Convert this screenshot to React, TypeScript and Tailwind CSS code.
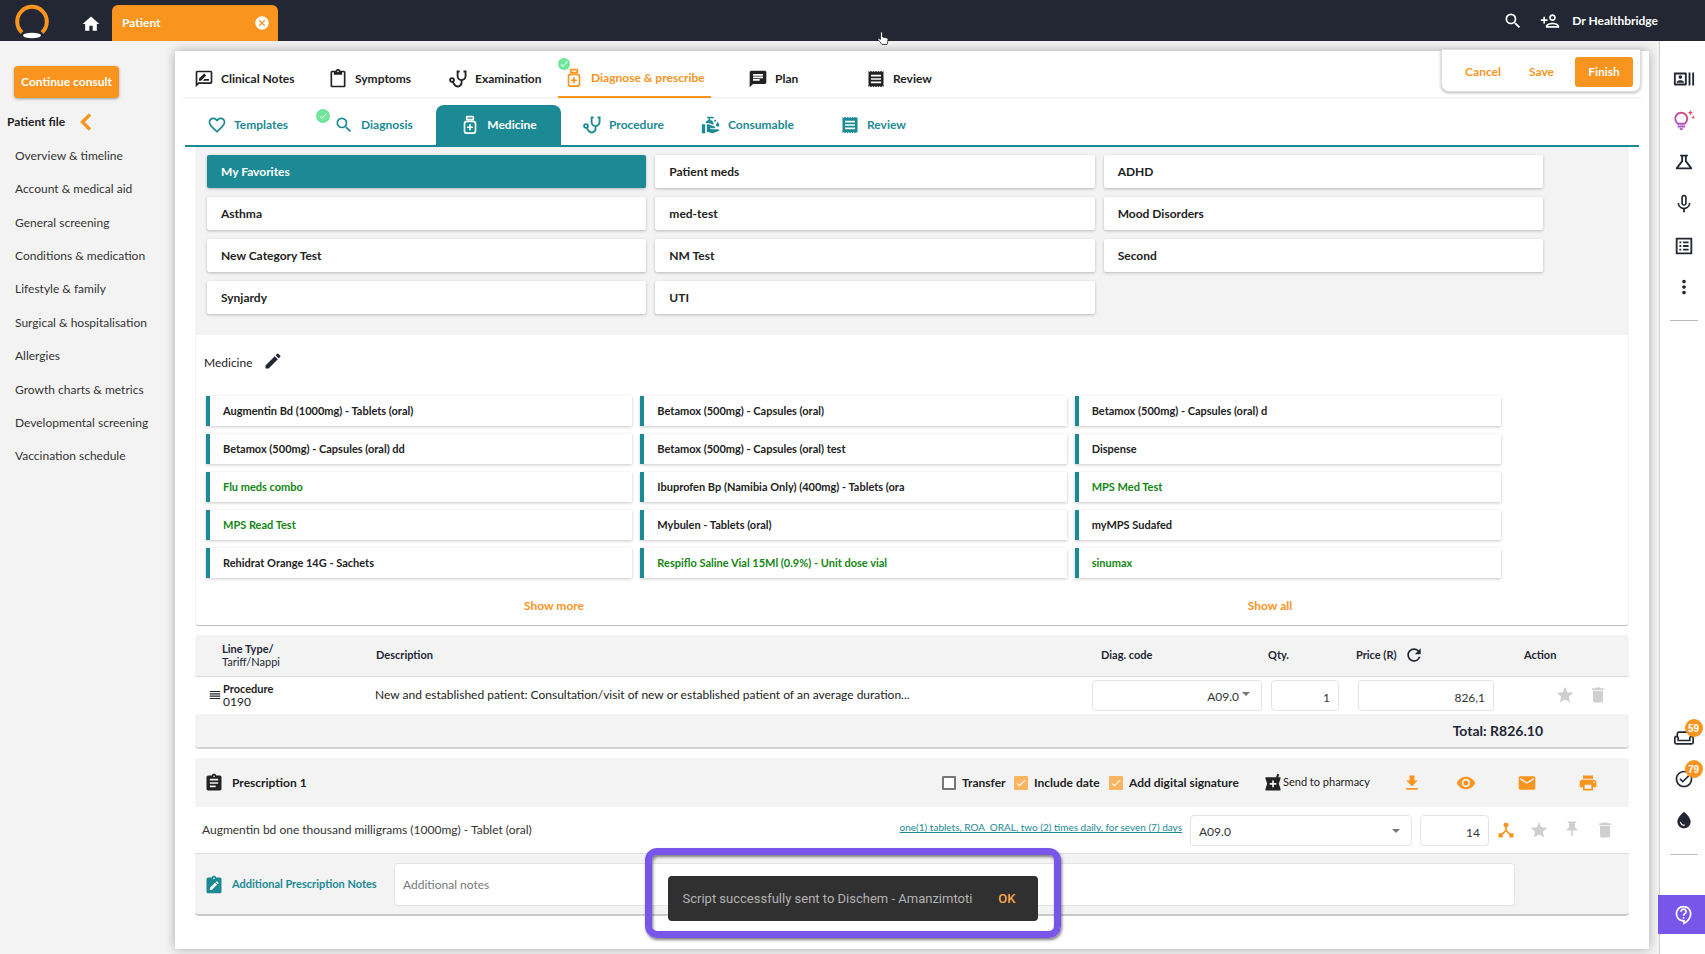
import type { IconType } from 'react-icons';
import {
  MdAssignment,
  MdCancel,
  MdChat,
  MdCheck,
  MdCleanHands,
  MdContentPaste,
  MdDelete,
  MdDeviceHub,
  MdEdit,
  MdEmail,
  MdFavoriteBorder,
  MdFileDownload,
  MdHome,
  MdLocalPharmacy,
  MdMicNone,
  MdMoreVert,
  MdOutlineContactSupport,
  MdOutlineListAlt,
  MdOutlinePersonAdd,
  MdOutlineRateReview,
  MdOutlineRecentActors,
  MdOutlineScience,
  MdOutlineTipsAndUpdates,
  MdOutlineWeekend,
  MdPrint,
  MdPushPin,
  MdReceipt,
  MdRefresh,
  MdReorder,
  MdSearch,
  MdStar,
  MdTaskAlt,
  MdVisibility,
  MdWaterDrop,
} from 'react-icons/md';

const sidebarItems = [
  'Overview & timeline',
  'Account & medical aid',
  'General screening',
  'Conditions & medication',
  'Lifestyle & family',
  'Surgical & hospitalisation',
  'Allergies',
  'Growth charts & metrics',
  'Developmental screening',
  'Vaccination schedule',
];

const categories = [
  'My Favorites',
  'Patient meds',
  'ADHD',
  'Asthma',
  'med-test',
  'Mood Disorders',
  'New Category Test',
  'NM Test',
  'Second',
  'Synjardy',
  'UTI',
];

const medicines = [
  { name: 'Augmentin Bd (1000mg) - Tablets (oral)' },
  { name: 'Betamox (500mg) - Capsules (oral)' },
  { name: 'Betamox (500mg) - Capsules (oral) d' },
  { name: 'Betamox (500mg) - Capsules (oral) dd' },
  { name: 'Betamox (500mg) - Capsules (oral) test' },
  { name: 'Dispense' },
  { name: 'Flu meds combo', combo: true },
  { name: 'Ibuprofen Bp (Namibia Only) (400mg) - Tablets (ora' },
  { name: 'MPS Med Test', combo: true },
  { name: 'MPS Read Test', combo: true },
  { name: 'Mybulen - Tablets (oral)' },
  { name: 'myMPS Sudafed' },
  { name: 'Rehidrat Orange 14G - Sachets' },
  { name: 'Respiflo Saline Vial 15Ml (0.9%) - Unit dose vial', combo: true },
  { name: 'sinumax', combo: true },
];

function Stethoscope({ className }: { className?: string }) {
  return (
    <svg viewBox="0 0 24 24" fill="none" stroke="currentColor" strokeWidth="2.2" className={className}>
      <path d="M14 3h-2.500v5.500a4.800 4.800 0 0 0 9.600 0V3h-2.500" />
      <path d="M16.300 13v3.300a4.700 4.700 0 0 1-8.700 2.400L5.800 15.500" />
      <circle cx="4.800" cy="13.200" r="2.300" />
    </svg>
  );
}

function PillBottle({ className }: { className?: string }) {
  return (
    <svg viewBox="0 0 24 24" fill="none" stroke="currentColor" strokeWidth="2" className={className}>
      <rect x="8" y="2" width="8" height="3.600" rx=".6" />
      <rect x="5.400" y="7.600" width="13.200" height="14.200" rx="3" />
      <path d="M12 11.200v7M8.500 14.700h7" />
    </svg>
  );
}

function ClipboardEdit({ className }: { className?: string }) {
  return (
    <svg viewBox="0 0 24 24" className={className}>
      <path
        fill="currentColor"
        d="M19 3h-4.180C14.400 1.840 13.300 1 12 1s-2.400.840-2.820 2H5a2 2 0 0 0-2 2v15a2 2 0 0 0 2 2h14a2 2 0 0 0 2-2V5a2 2 0 0 0-2-2z"
      />
      <circle cx="12" cy="4" r="1" fill="#fff" />
      <path fill="#fff" d="M7 15.600V18h2.400l6.200-6.200-2.400-2.400zM17.300 10.100a.7.7 0 0 0 0-1L15.900 7.700a.7.7 0 0 0-1 0l-1 1 2.400 2.400z" />
    </svg>
  );
}

function DoneBadge({ className }: { className: string }) {
  return (
    <span className={`absolute flex items-center justify-center rounded-full bg-[#6fe79a] text-white ${className}`}>
      <MdCheck className="size-2.5" />
    </span>
  );
}

type Tab = { label: string; icon: IconType | typeof Stethoscope; width: string; done?: boolean; active?: boolean };

const mainTabs: Tab[] = [
  { label: 'Clinical Notes', icon: MdOutlineRateReview, width: 'w-[134px]' },
  { label: 'Symptoms', icon: MdContentPaste, width: 'w-[120px]' },
  { label: 'Examination', icon: Stethoscope, width: 'w-[110px]' },
  { label: 'Diagnose & prescribe', icon: PillBottle, width: 'w-[153px] pl-1.5', done: true, active: true },
  { label: 'Plan', icon: MdChat, width: 'ml-[37px] w-[118px]' },
  { label: 'Review', icon: MdReceipt, width: 'w-[100px]' },
];

const subTabs: Tab[] = [
  { label: 'Templates', icon: MdFavoriteBorder, width: 'w-[127px]' },
  { label: 'Diagnosis', icon: MdSearch, width: 'w-[102px]', done: true },
  { label: 'Medicine', icon: PillBottle, width: 'w-[125px] justify-center', active: true },
  { label: 'Procedure', icon: Stethoscope, width: 'ml-[21px] w-[119px]' },
  { label: 'Consumable', icon: MdCleanHands, width: 'w-[139px]' },
  { label: 'Review', icon: MdReceipt, width: 'w-[100px]' },
];

function Header() {
  return (
    <header className="flex h-[41px] items-center bg-[#222733] text-white">
      <a href="#" aria-label="Healthbridge" className="ml-[15px] block">
        <svg viewBox="0 0 34 36" className="h-9 w-[34px]">
          <path d="M7 29.500A14.800 14.800 0 1 1 27 29.500" fill="none" stroke="#f9941e" strokeWidth="4" />
          <ellipse cx="17" cy="32.500" rx="9" ry="2.700" fill="#fff" />
        </svg>
      </a>
      <a href="#" aria-label="Home" className="mt-1.5 ml-8">
        <MdHome className="size-5" />
      </a>
      <div className="ml-[11px] flex h-9 w-[166px] items-center justify-between self-end rounded-t-md bg-[#f9941e] pr-2 pl-2.5">
        <span className="text-xs font-bold">Patient</span>
        <button aria-label="Close patient">
          <MdCancel className="size-4" />
        </button>
      </div>
      <div className="ml-auto flex items-center pr-[47px]">
        <button aria-label="Search" className="mr-[17px]">
          <MdSearch className="size-5" />
        </button>
        <button aria-label="Add patient" className="mr-3">
          <MdOutlinePersonAdd className="size-5" />
        </button>
        <span className="text-xs font-bold">Dr Healthbridge</span>
      </div>
    </header>
  );
}

function Sidebar() {
  return (
    <aside className="w-[175px] shrink-0 pt-[25px]">
      <button className="ml-3.5 h-8 w-[105px] rounded-sm bg-[#f9941e] text-xs font-bold text-white shadow-[0_1px_3px_rgba(0,0,0,0.35)]">
        Continue consult
      </button>
      <div className="mt-[15px] ml-[7px] flex items-center gap-3.5">
        <h2 className="text-xs font-bold">Patient file</h2>
        <button aria-label="Collapse patient file">
          <svg viewBox="0 0 13 18" className="h-[18px] w-[13px]">
            <path d="M11 1.500 3.500 9l7.500 7.500" fill="none" stroke="#f9941e" strokeWidth="3.400" />
          </svg>
        </button>
      </div>
      <ul className="mt-2 ml-[15px] flex h-[334px] flex-col text-xs text-[#333]">
        {sidebarItems.map((item) => (
          <li key={item} className="flex flex-1 items-center">
            <a href="#">{item}</a>
          </li>
        ))}
      </ul>
    </aside>
  );
}

function MainTabs() {
  return (
    <nav className="mx-2 flex h-12 border-b-2 border-[#f5f5f5] pl-[11px] text-xs font-bold">
      {mainTabs.map((tab) => (
        <a
          key={tab.label}
          href="#"
          className={`relative flex h-[47px] items-center gap-[7px] whitespace-nowrap pt-2 ${tab.width} ${
            tab.active ? 'border-b-2 border-[#f9941e] text-[#f9941e]' : ''
          }`}
        >
          {tab.done && <DoneBadge className="top-[7px] left-0 size-3" />}
          <tab.icon className="size-5 shrink-0" />
          {tab.label}
        </a>
      ))}
    </nav>
  );
}

function SubTabs() {
  return (
    <nav className="mx-2.5 flex h-12 items-end border-b-2 border-[#1b8a94] pl-[22px] text-xs font-bold text-[#1b8a94]">
      {subTabs.map((tab) => (
        <a
          key={tab.label}
          href="#"
          className={`relative flex h-10 items-center gap-[7px] whitespace-nowrap ${tab.width} ${
            tab.active ? 'rounded-t-lg bg-[#1b8a94] text-white' : ''
          }`}
        >
          {tab.done && <DoneBadge className="top-1 -left-[18px] size-3.5" />}
          <tab.icon className="size-5 shrink-0" />
          {tab.label}
        </a>
      ))}
    </nav>
  );
}

function Favourites() {
  return (
    <section className="mx-5 rounded-b border-b border-[#bdbdbd]">
      <div className="grid grid-cols-3 gap-[9px] bg-[#f3f3f3] pt-2 pr-[86px] pb-[21px] pl-3">
        {categories.map((category, i) => (
          <button
            key={category}
            className={`h-[33px] rounded-xs px-3.5 text-left text-xs font-bold shadow-[0_1px_3px_rgba(0,0,0,0.25)] ${
              i === 0 ? 'bg-[#1b8a94] text-white' : 'bg-white'
            }`}
          >
            {category}
          </button>
        ))}
      </div>
      <div className="border-x border-[#f3f3f3]">
        <div className="flex h-[52px] items-center gap-2.5 pl-2">
          <h3 className="pt-1 text-xs">Medicine</h3>
          <button aria-label="Edit medicine">
            <MdEdit className="size-5 text-[#222733]" />
          </button>
        </div>
        <div className="mt-[9px] grid grid-cols-3 gap-2 pr-[127px] pl-2.5">
          {medicines.map((med) => (
            <button
              key={med.name}
              className={`h-[30px] border-l-4 border-[#1b8a94] bg-white px-[13px] text-left text-[11px] font-bold shadow-[0_1px_3px_rgba(0,0,0,0.22)] ${
                med.combo ? 'text-[#138613]' : ''
              }`}
            >
              {med.name}
            </button>
          ))}
        </div>
        <div className="mt-2 grid h-[39px] grid-cols-2 place-items-center text-xs font-bold text-[#f9941e]">
          <button>Show more</button>
          <button>Show all</button>
        </div>
      </div>
    </section>
  );
}

const field = 'rounded-sm border border-[#e4e4e4] bg-white text-xs text-[#333]';

function LineItems() {
  return (
    <section className="mx-5 mt-[9px] rounded border-b-2 border-[#d3d3d3] bg-[#f3f3f3]">
      <table className="w-full table-fixed border-collapse text-left text-[11px]">
        <colgroup>
          <col className="w-[180px]" />
          <col />
          <col className="w-[172px]" />
          <col className="w-[88px]" />
          <col className="w-[154px]" />
          <col className="w-[123px]" />
        </colgroup>
        <thead className="text-[#222733]">
          <tr className="h-[41px] border-b border-[#dedede]">
            <th className="pl-[27px] leading-[13px] font-bold">
              Line Type/
              <span className="block font-normal">Tariff/Nappi</span>
            </th>
            <th className="pl-px">Description</th>
            <th className="pl-[9px]">Diag. code</th>
            <th className="pl-1">Qty.</th>
            <th className="pl-1">
              <div className="flex items-center gap-2">
                Price (R)
                <button aria-label="Refresh prices">
                  <MdRefresh className="size-5" />
                </button>
              </div>
            </th>
            <th className="pl-[18px]">Action</th>
          </tr>
        </thead>
        <tbody>
          <tr className="h-[38px] bg-white">
            <td className="pl-[13px]">
              <div className="flex items-center gap-px">
                <MdReorder className="size-3.5" />
                <div className="leading-[13px]">
                  <div className="font-bold">Procedure</div>
                  <div className="text-xs leading-[13px]">0190</div>
                </div>
              </div>
            </td>
            <td className="truncate text-xs">
              New and established patient: Consultation/visit of new or established patient of an average duration...
            </td>
            <td>
              <div className="relative w-[170px]">
                <select
                  aria-label="Diagnosis code"
                  className={`h-[31px] w-full appearance-none pt-1 pr-[22px] [text-align-last:right] ${field}`}
                >
                  <option>A09.0</option>
                </select>
                <Caret className="top-3 right-3" />
              </div>
            </td>
            <td className="pl-[7px]">
              <input aria-label="Quantity" defaultValue="1" className={`h-[31px] w-[68px] pt-1 pr-2 text-right ${field}`} />
            </td>
            <td className="pl-1.5">
              <input aria-label="Price" defaultValue="826,1" className={`h-[31px] w-[136px] pt-1 pr-2 text-right ${field}`} />
            </td>
            <td className="pl-[49px]">
              <div className="flex gap-[13px] text-[#cfcfcf]">
                <button aria-label="Favourite line">
                  <MdStar className="size-5" />
                </button>
                <button aria-label="Delete line">
                  <MdDelete className="size-5" />
                </button>
              </div>
            </td>
          </tr>
        </tbody>
        <tfoot>
          <tr className="h-[33px]">
            <td colSpan={6} className="pr-[86px] text-right text-sm font-bold text-[#222733]">
              Total: R826.10
            </td>
          </tr>
        </tfoot>
      </table>
    </section>
  );
}

function Caret({ className }: { className: string }) {
  return (
    <svg viewBox="0 0 8 4" className={`pointer-events-none absolute h-1 w-2 ${className}`}>
      <path d="M0 0h8L4 4z" fill="#777" />
    </svg>
  );
}

function Checkbox({ label, width, checked }: { label: string; width: string; checked?: boolean }) {
  return (
    <label className={`flex shrink-0 items-center gap-1.5 whitespace-nowrap ${width}`}>
      <span className="relative size-3.5">
        <input
          type="checkbox"
          defaultChecked={checked}
          className="peer block size-3.5 appearance-none rounded-[1px] border-2 border-[#777] bg-white checked:border-[#fbb45f] checked:bg-[#fbb45f]"
        />
        <MdCheck className="pointer-events-none absolute top-px left-px hidden size-3 text-white peer-checked:block" />
      </span>
      {label}
    </label>
  );
}

function Prescription() {
  return (
    <section className="mx-5 mt-[9px] rounded border-b-2 border-[#c9c9c9] bg-[#f3f3f3]">
      <div className="flex h-[49px] items-center pr-[11px] pl-[9px] text-xs font-bold">
        <MdAssignment className="size-5" />
        <h3 className="ml-2">Prescription 1</h3>
        <div className="ml-auto flex items-center">
          <Checkbox label="Transfer" width="w-[72px]" />
          <Checkbox label="Include date" width="w-[95px]" checked />
          <Checkbox label="Add digital signature" width="w-[154px]" checked />
          <button className="flex w-[126px] items-center text-[11px] font-normal whitespace-nowrap">
            <MdLocalPharmacy className="size-5" />
            Send to pharmacy
          </button>
          <div className="flex text-[#f9941e]">
            <button aria-label="Download" className="flex w-[46px] justify-center">
              <MdFileDownload className="size-5" />
            </button>
            <button aria-label="Preview" className="flex w-[61px] justify-center">
              <MdVisibility className="size-5" />
            </button>
            <button aria-label="Email" className="flex w-[61px] justify-center">
              <MdEmail className="size-5" />
            </button>
            <button aria-label="Print" className="flex w-[61px] justify-center">
              <MdPrint className="size-5" />
            </button>
          </div>
        </div>
      </div>
      <div className="flex h-[47px] items-center border-b border-[#dedede] bg-white pr-2 pl-[7px] text-xs text-[#333]">
        <span className="flex-1">Augmentin bd one thousand milligrams (1000mg) - Tablet (oral)</span>
        <a href="#" className="mr-2 pb-1 text-[10px] text-[#1b8a94] underline">
          one(1) tablets, ROA_ORAL, two (2) times daily, for seven (7) days
        </a>
        <div className="relative mr-2 w-[222px]">
          <select aria-label="Prescription diagnosis code" className={`h-[31px] w-full appearance-none pt-1 pl-2 ${field}`}>
            <option>A09.0</option>
          </select>
          <Caret className="top-3.5 right-3" />
        </div>
        <input aria-label="Prescribed quantity" defaultValue="14" className={`h-[31px] w-[69px] pt-1 pr-2 text-right ${field}`} />
        <div className="flex text-[#cfcfcf]">
          <button aria-label="Split script" className="flex w-[33px] justify-center text-[#f9941e]">
            <MdDeviceHub className="size-5" />
          </button>
          <button aria-label="Favourite" className="flex w-[33px] justify-center">
            <MdStar className="size-5" />
          </button>
          <button aria-label="Pin" className="flex w-[33px] justify-center">
            <MdPushPin className="size-[18px]" />
          </button>
          <button aria-label="Delete" className="flex w-[33px] justify-center">
            <MdDelete className="size-5" />
          </button>
        </div>
      </div>
      <div className="flex items-center pt-[9px] pr-[114px] pb-2 pl-[9px]">
        <ClipboardEdit className="size-5 text-[#1b8a94]" />
        <label htmlFor="notes" className="ml-2 w-[162px] text-[11px] font-bold text-[#1b8a94]">
          Additional Prescription Notes
        </label>
        <input id="notes" placeholder="Additional notes" className={`h-[43px] flex-1 px-2 placeholder:text-[#777] ${field}`} />
      </div>
    </section>
  );
}

const railTop: { label: string; icon: IconType }[] = [
  { label: 'Patient card', icon: MdOutlineRecentActors },
  { label: 'Insights', icon: MdOutlineTipsAndUpdates },
  { label: 'Lab results', icon: MdOutlineScience },
  { label: 'Dictate', icon: MdMicNone },
  { label: 'Forms', icon: MdOutlineListAlt },
  { label: 'More', icon: MdMoreVert },
];

const railBottom: { label: string; icon: IconType; count?: number }[] = [
  { label: 'Waiting room', icon: MdOutlineWeekend, count: 59 },
  { label: 'Tasks', icon: MdTaskAlt, count: 79 },
  { label: 'Theme', icon: MdWaterDrop },
];

function Rail() {
  return (
    <aside className="flex w-[46px] shrink-0 flex-col items-center border-l border-[#cfcfcf] bg-white pt-[17px] pl-0.5 text-[#222733]">
      <svg className="absolute size-0">
        <defs>
          <linearGradient id="insight" x1="0" y1="1" x2="1" y2="0">
            <stop offset="0" stopColor="#9457eb" />
            <stop offset="1" stopColor="#ee4444" />
          </linearGradient>
        </defs>
      </svg>
      <div className="flex h-[250px] flex-col">
        {railTop.map(({ label, icon: Icon }) => (
          <button key={label} aria-label={label} className="flex flex-1 items-center">
            <Icon className={`size-[22px] ${label === 'Insights' ? 'fill-[url(#insight)]' : ''}`} />
          </button>
        ))}
      </div>
      <hr className="mt-3 w-7 border-[#bbb]" />
      <div className="mt-auto flex flex-col items-center">
        {railBottom.map(({ label, icon: Icon, count }) => (
          <button key={label} aria-label={label} className="relative flex h-[41px] items-center">
            <Icon className="size-5" />
            {count && (
              <span className="absolute top-0.5 left-[11px] flex size-[18px] items-center justify-center rounded-full bg-[#f9941e] font-['Liberation_Sans',sans-serif] text-[10px] font-bold text-white">
                {count}
              </span>
            )}
          </button>
        ))}
      </div>
      <hr className="mt-3.5 w-7 border-[#bbb]" />
      <button aria-label="Help" className="mt-10 mb-5 flex h-[39px] w-[47px] items-center justify-center self-end bg-[#7856ea] pl-1 text-white">
        <MdOutlineContactSupport className="size-5" />
      </button>
    </aside>
  );
}

function Snackbar() {
  return (
    <div className="fixed bottom-4 left-1/2 flex h-[90px] w-[416px] -translate-x-1/2 items-start justify-center rounded-xl border-[7px] border-[#7856ea] shadow-[1px_2px_3px_rgba(0,0,0,0.5),inset_1px_2px_3px_rgba(0,0,0,0.5)]">
      <div className="mt-[21px] flex h-[45px] w-[370px] items-center justify-between rounded-sm bg-[#303030] pr-[22px] pl-[15px] font-[Roboto,sans-serif] text-[13px] text-[#b3b3b3]">
        Script successfully sent to Dischem - Amanzimtoti
        <button className="font-medium text-[#f9a94e]">OK</button>
      </div>
    </div>
  );
}

function PointerHand() {
  return (
    <svg viewBox="0 0 12 15" className="pointer-events-none fixed top-[31px] left-[877px] h-[15px] w-3">
      <path
        d="M3.500 8.500V2a1 1 0 0 1 2 0v4l4.500 1a1.300 1.300 0 0 1 1 1.300c0 2-.6 3-1 5.200H5C4 11.500 2 10 1 8.500c-.4-.8.6-1.400 1.300-.8z"
        fill="#fff"
        stroke="#222"
        strokeWidth=".8"
      />
    </svg>
  );
}

export default function App() {
  return (
    <div className="flex min-h-screen flex-col bg-[#f3f3f3] font-[Lato,sans-serif] text-[#222]">
      <Header />
      <div className="flex flex-1">
        <Sidebar />
        <main className="relative mt-2.5 mr-2.5 mb-[5px] min-w-0 flex-1 bg-white shadow-[0_0_10px_rgba(0,0,0,0.3)]">
          <MainTabs />
          <SubTabs />
          <Favourites />
          <LineItems />
          <Prescription />
          <div className="absolute -top-0.5 right-2 flex h-[43px] w-50 items-center justify-end rounded-b-lg border border-[#ddd] bg-white pt-0.5 pr-[7px] text-xs font-bold text-[#f9941e] shadow-[0_1px_3px_rgba(0,0,0,0.3)]">
            <button className="mr-7">Cancel</button>
            <button className="mr-[21px]">Save</button>
            <button className="h-[30px] w-[58px] rounded-[3px] bg-[#f9941e] text-white">Finish</button>
          </div>
        </main>
        <Rail />
      </div>
      <Snackbar />
      <PointerHand />
    </div>
  );
}
